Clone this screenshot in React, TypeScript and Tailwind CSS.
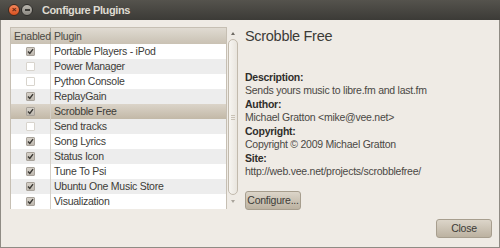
import React from 'react';

const plugins = [
  { name: 'Portable Players - iPod', enabled: true },
  { name: 'Power Manager', enabled: false },
  { name: 'Python Console', enabled: false },
  { name: 'ReplayGain', enabled: true },
  { name: 'Scrobble Free', enabled: true, selected: true },
  { name: 'Send tracks', enabled: false },
  { name: 'Song Lyrics', enabled: true },
  { name: 'Status Icon', enabled: true },
  { name: 'Tune To Psi', enabled: true },
  { name: 'Ubuntu One Music Store', enabled: true },
  { name: 'Visualization', enabled: true },
];

function Check({ on }: { on: boolean }) {
  if (!on) {
    return <div className="w-[9px] h-[9px] rounded-[1px] border border-[#d8d4cd] bg-white" />;
  }
  return (
    <div className="w-[9px] h-[9px] rounded-[1px] border border-[#a8a29a] bg-gradient-to-b from-[#d6d1c9] to-[#bfb9b0] flex items-center justify-center">
      <svg width="7" height="7" viewBox="0 0 7 7">
        <path d="M1 3.6 L2.8 5.4 L6 1.2" stroke="#3a3834" strokeWidth="1.4" fill="none" />
      </svg>
    </div>
  );
}

function Field({ label, value }: { label: string; value: string }) {
  return (
    <div className="mb-[1px]">
      <div className="font-bold text-[#2f2e2b] leading-[13px]">{label}</div>
      <div className="text-[#4a4844] leading-[13px]">{value}</div>
    </div>
  );
}

export default function App() {
  return (
    <div
      className="w-[500px] h-[248px] flex flex-col bg-[#3c3b37] text-[10.5px] tracking-[-0.25px]"
      style={{ fontFamily: '"Liberation Sans", Arial, sans-serif' }}
    >
      {/* title bar */}
      <div className="h-[20px] flex items-center pl-[8px] bg-gradient-to-b from-[#55534d] to-[#3c3b37]">
        <div className="w-[12px] h-[12px] rounded-full bg-gradient-to-b from-[#f5875a] to-[#d8501e] border border-[#3a2a20] flex items-center justify-center">
          <span className="text-[#5a2410] text-[8px] font-bold leading-none">×</span>
        </div>
        <div className="w-[12px] h-[12px] ml-[1px] rounded-full bg-gradient-to-b from-[#b9b6ae] to-[#8d8a83] border border-[#2e2d2a] flex items-center justify-center">
          <div className="w-[5px] h-[2px] bg-[#3c3b37]" />
        </div>
        <div className="ml-[9px] text-[#dfdbd2] font-bold text-[11px] tracking-[-0.4px]">Configure Plugins</div>
      </div>

      {/* body */}
      <div className="flex-1 flex bg-[#efebe5] border-l border-r border-b border-[#8f8b84] pl-[9px] pt-[7px]">
        <div className="flex">
          <div className="w-[217px] h-[182px] border border-[#c6bfb3] bg-white flex flex-col">
            <div className="h-[16px] flex bg-gradient-to-b from-[#e0dbd2] to-[#c9c1b3] text-[#4b4943]">
              <div className="w-[40px] border-r border-[#b5ad9f] pl-[3px] leading-[16px]">Enabled</div>
              <div className="pl-[3px] leading-[16px]">Plugin</div>
            </div>
            {plugins.map((p, i) => (
              <div
                key={p.name}
                className={
                  'h-[15px] flex ' +
                  (p.selected
                    ? 'bg-gradient-to-b from-[#dbd4c9] to-[#c2b8a7]'
                    : i % 2 === 1
                    ? 'bg-[#ededed]'
                    : 'bg-white')
                }
              >
                <div className="w-[40px] border-r border-[#d5d0c8] flex items-center justify-center">
                  <Check on={p.enabled} />
                </div>
                <div className="pl-[3px] leading-[15px] text-[#3c3b37]">{p.name}</div>
              </div>
            ))}
          </div>
          {/* scrollbar */}
          <div className="w-[11px] h-[182px] flex flex-col items-center">
            <div className="h-[12px] flex items-center">
              <div className="w-0 h-0 border-l-[2.5px] border-r-[2.5px] border-b-[3px] border-l-transparent border-r-transparent border-b-[#6e6a63]" />
            </div>
            <div className="w-[10px] h-[156px] rounded-[5px] border border-[#c2baad] bg-gradient-to-r from-[#f7f5f1] to-[#e9e5de] flex items-center justify-center">
              <div className="flex flex-col gap-[1px]">
                <div className="w-[4px] h-px bg-[#c9c2b6]" />
                <div className="w-[4px] h-px bg-[#c9c2b6]" />
                <div className="w-[4px] h-px bg-[#c9c2b6]" />
              </div>
            </div>
            <div className="h-[12px] flex items-center">
              <div className="w-0 h-0 border-l-[2.5px] border-r-[2.5px] border-t-[3px] border-l-transparent border-r-transparent border-t-[#a9a49c]" />
            </div>
          </div>
        </div>

        {/* details */}
        <div className="flex-1 flex flex-col ml-[7px] pr-[7px]">
          <div className="text-[14.5px] tracking-[-0.3px] text-[#3c3b37] leading-[18px]">Scrobble Free</div>
          <div className="mt-[26px]">
            <Field label="Description:" value="Sends yours music to libre.fm and last.fm" />
            <Field label="Author:" value="Michael Gratton <mike@vee.net>" />
            <Field label="Copyright:" value="Copyright © 2009 Michael Gratton" />
            <Field label="Site:" value="http://web.vee.net/projects/scrobblefree/" />
          </div>
          <div className="mt-[12px]">
            <button className="h-[19px] w-[56px] rounded-[3px] border border-[#a79e8e] bg-gradient-to-b from-[#dcd5c9] to-[#bcb2a1] text-[#3c3b37]">
              Configure...
            </button>
          </div>
          <div className="mt-[9px] flex justify-end">
            <button className="w-[56px] h-[19px] rounded-[3px] border border-[#a79e8e] bg-gradient-to-b from-[#dcd5c9] to-[#bcb2a1] text-[#3c3b37]">
              Close
            </button>
          </div>
        </div>
      </div>
    </div>
  );
}
